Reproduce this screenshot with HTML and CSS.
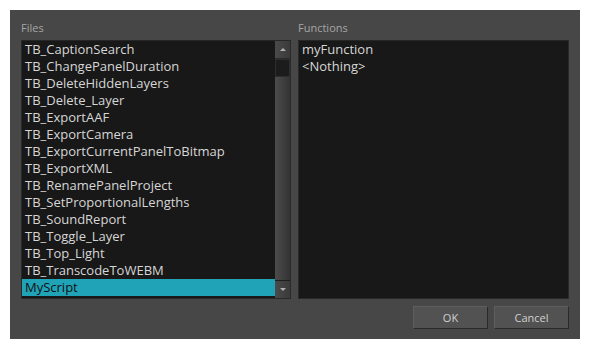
FILE: index.html
```html
<!DOCTYPE html>
<html lang="en">
<head>
  <meta charset="UTF-8">
  <title>Functions</title>
  <link rel="stylesheet" href="styles.css">
</head>
<body>
  <div class="dialog">
    <div class="panes">
      <div class="pane">
        <div class="pane-label">Files</div>
        <div class="list-box">
          <ul class="list">
            <li>TB_CaptionSearch</li>
            <li>TB_ChangePanelDuration</li>
            <li>TB_DeleteHiddenLayers</li>
            <li>TB_Delete_Layer</li>
            <li>TB_ExportAAF</li>
            <li>TB_ExportCamera</li>
            <li>TB_ExportCurrentPanelToBitmap</li>
            <li>TB_ExportXML</li>
            <li>TB_RenamePanelProject</li>
            <li>TB_SetProportionalLengths</li>
            <li>TB_SoundReport</li>
            <li>TB_Toggle_Layer</li>
            <li>TB_Top_Light</li>
            <li>TB_TranscodeToWEBM</li>
            <li class="selected">MyScript</li>
          </ul>
          <div class="scrollbar">
            <div class="scroll-btn"><span class="arrow up"></span></div>
            <div class="scroll-thumb"></div>
            <div class="scroll-track"></div>
            <div class="scroll-btn"><span class="arrow down"></span></div>
          </div>
        </div>
      </div>
      <div class="pane">
        <div class="pane-label">Functions</div>
        <div class="list-box">
          <ul class="list">
            <li>myFunction</li>
            <li>&lt;Nothing&gt;</li>
          </ul>
        </div>
      </div>
    </div>
    <div class="buttons">
      <button class="btn">OK</button>
      <button class="btn">Cancel</button>
    </div>
  </div>
</body>
</html>
```

FILE: styles.css
```css
body {
  margin: 10px;
  background-color: #ffffff;
  font-family: 'Open Sans', 'Noto Sans', sans-serif;
  font-size: 12px;
}

.dialog {
  width: 570px;
  height: 329px;
  box-sizing: border-box;
  background-color: #474747;
  padding: 10px 11px 10px 11px;
  display: flex;
  flex-direction: column;
}

.panes {
  display: flex;
  gap: 7px;
  height: 279px;
}

.pane {
  display: flex;
  flex-direction: column;
}

.pane:first-child {
  width: 270px;
}

.pane:last-child {
  width: 271px;
}

.pane-label {
  color: #a6a6a6;
  font-size: 11px;
  height: 20px;
  line-height: 16px;
}

.list-box {
  flex: 1;
  display: flex;
  background-color: #181818;
  border: 1px solid #2a2a2a;
  border-top-color: #262626;
}

.list {
  flex: 1;
  list-style: none;
  margin: 0;
  padding: 0;
}

.list li {
  height: 17px;
  line-height: 17px;
  padding-left: 3px;
  font-size: 13px;
  color: #d6d6d6;
  white-space: nowrap;
}

.list li.selected {
  background-color: #21a3b7;
  color: #101010;
}

.scrollbar {
  width: 15px;
  display: flex;
  flex-direction: column;
  background-color: #333333;
}

.scroll-btn {
  height: 17px;
  background: linear-gradient(to right, #4a4a4a, #3a3a3a);
  display: flex;
  align-items: center;
  justify-content: center;
  border-bottom: 1px solid #2a2a2a;
}

.scroll-btn:last-child {
  border-bottom: none;
  border-top: 1px solid #1e1e1e;
}

.arrow {
  width: 0;
  height: 0;
  border-left: 3px solid transparent;
  border-right: 3px solid transparent;
}

.arrow.up {
  border-bottom: 3px solid #b0b0b0;
}

.arrow.down {
  border-top: 3px solid #b0b0b0;
}

.scroll-thumb {
  height: 16px;
  background-color: #1c1c1c;
  border: 1px solid #2e2e2e;
}

.scroll-track {
  flex: 1;
  background: linear-gradient(to right, #4c4c4c, #333333);
}

.buttons {
  display: flex;
  justify-content: flex-end;
  gap: 6px;
  margin-top: 7px;
}

.btn {
  width: 75px;
  height: 23px;
  background-color: #525252;
  color: #d0d0d0;
  font-family: 'Open Sans', 'Noto Sans', sans-serif;
  font-size: 11px;
  border: 1px solid #2a2a2a;
  border-top-color: #5e5e5e;
  border-left-color: #5e5e5e;
  padding: 0;
}
```
